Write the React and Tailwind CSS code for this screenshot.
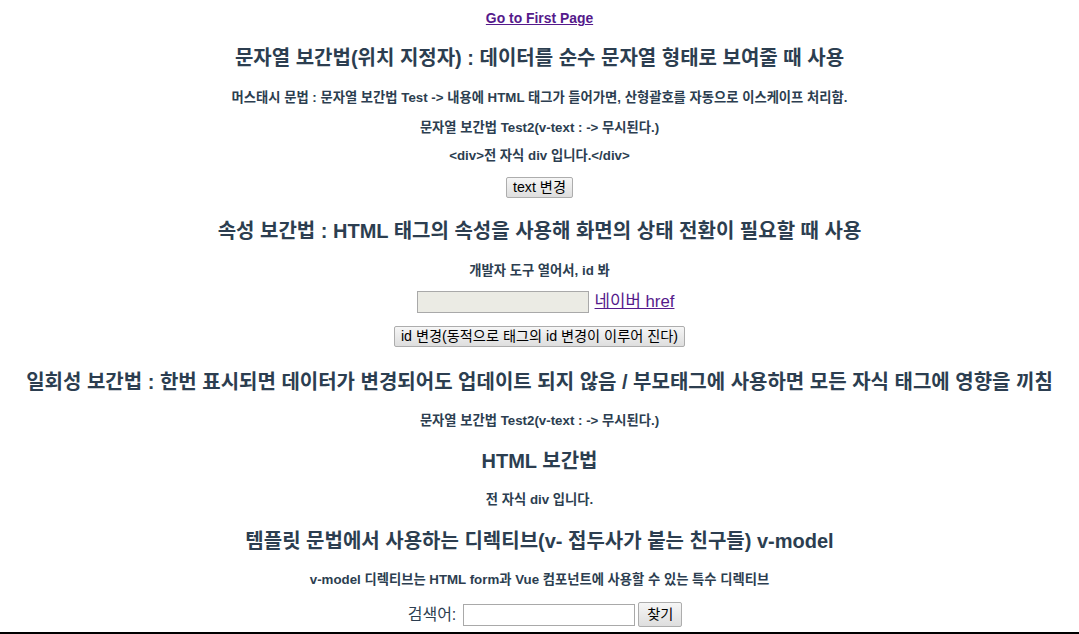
import React, { useState } from 'react';

const font = { fontFamily: '"Liberation Sans", "Noto Sans CJK KR", sans-serif' };

function Heading({ children, mt }) {
  return (
    <h3 className={`${mt} text-[20px] leading-[24px] font-bold text-[#2c3e50] whitespace-nowrap`}>{children}</h3>
  );
}

function Small({ children, mt }) {
  return (
    <div className={`${mt} text-[13.3px] leading-[16px] font-bold text-[#2c3e50] whitespace-nowrap`}>{children}</div>
  );
}

const btn =
  'h-[23px] px-[6px] text-[14.2px] leading-[19px] text-black border border-[#adadad] rounded-[2px] bg-gradient-to-b from-[#f6f6f6] to-[#dedede]';

export default function App() {
  const [msg] = useState('<div>전 자식 div 입니다.</div>');
  const [keyword, setKeyword] = useState('');

  return (
    <div style={font} className="w-[1079px] h-[634px] bg-white overflow-hidden flex flex-col items-center text-center">
      <a href="#" className="mt-[10px] text-[13.9px] leading-[16px] font-bold text-[#551a8b] underline">
        Go to First Page
      </a>

      <Heading mt="mt-[20px]">문자열 보간법(위치 지정자) : 데이터를 순수 문자열 형태로 보여줄 때 사용</Heading>
      <Small mt="mt-[20px]">머스태시 문법 : 문자열 보간법 Test -&gt; 내용에 HTML 태그가 들어가면, 산형괄호를 자동으로 이스케이프 처리함.</Small>
      <Small mt="mt-[14px]">문자열 보간법 Test2(v-text : -&gt; 무시된다.)</Small>
      <Small mt="mt-[12px]">{msg}</Small>
      <button className={`mt-[13px] ${btn}`}>text 변경</button>

      <Heading mt="mt-[21px]">속성 보간법 : HTML 태그의 속성을 사용해 화면의 상태 전환이 필요할 때 사용</Heading>
      <Small mt="mt-[20px]">개발자 도구 열어서, id 봐</Small>
      <div className="mt-[12px] ml-[12px] h-[22px] flex items-center gap-[6px]">
        <input
          disabled
          className="w-[172px] h-[22px] bg-[#ebebe4] border border-[#a9a9a9]"
        />
        <a href="#" className="text-[16.8px] leading-[20px] text-[#551a8b] underline">네이버 href</a>
      </div>
      <button className={`mt-[13px] ${btn}`}>id 변경(동적으로 태그의 id 변경이 이루어 진다)</button>

      <Heading mt="mt-[23px]">일회성 보간법 : 한번 표시되면 데이터가 변경되어도 업데이트 되지 않음 / 부모태그에 사용하면 모든 자식 태그에 영향을 끼침</Heading>
      <Small mt="mt-[19px]">문자열 보간법 Test2(v-text : -&gt; 무시된다.)</Small>

      <Heading mt="mt-[20px]">HTML 보간법</Heading>
      <Small mt="mt-[19px]">전 자식 div 입니다.</Small>

      <Heading mt="mt-[21px]">템플릿 문법에서 사용하는 디렉티브(v- 접두사가 붙는 친구들) v-model</Heading>
      <Small mt="mt-[19px]">v-model 디렉티브는 HTML form과 Vue 컴포넌트에 사용할 수 있는 특수 디렉티브</Small>

      <div className="mt-[14px] ml-[11px] h-[25px] flex items-center text-[16px] text-[#2c3e50]">
        <span className="mr-[7px]">검색어:</span>
        <input
          value={keyword}
          onChange={(e) => setKeyword(e.target.value)}
          className="w-[172px] h-[22px] border border-[#a9a9a9] bg-white"
        />
        <button className={`ml-[3px] h-[25px] w-[44px] ${btn}`}>찾기</button>
      </div>

      <div className="mt-[5px] w-full border-t-2 border-black" />
    </div>
  );
}
